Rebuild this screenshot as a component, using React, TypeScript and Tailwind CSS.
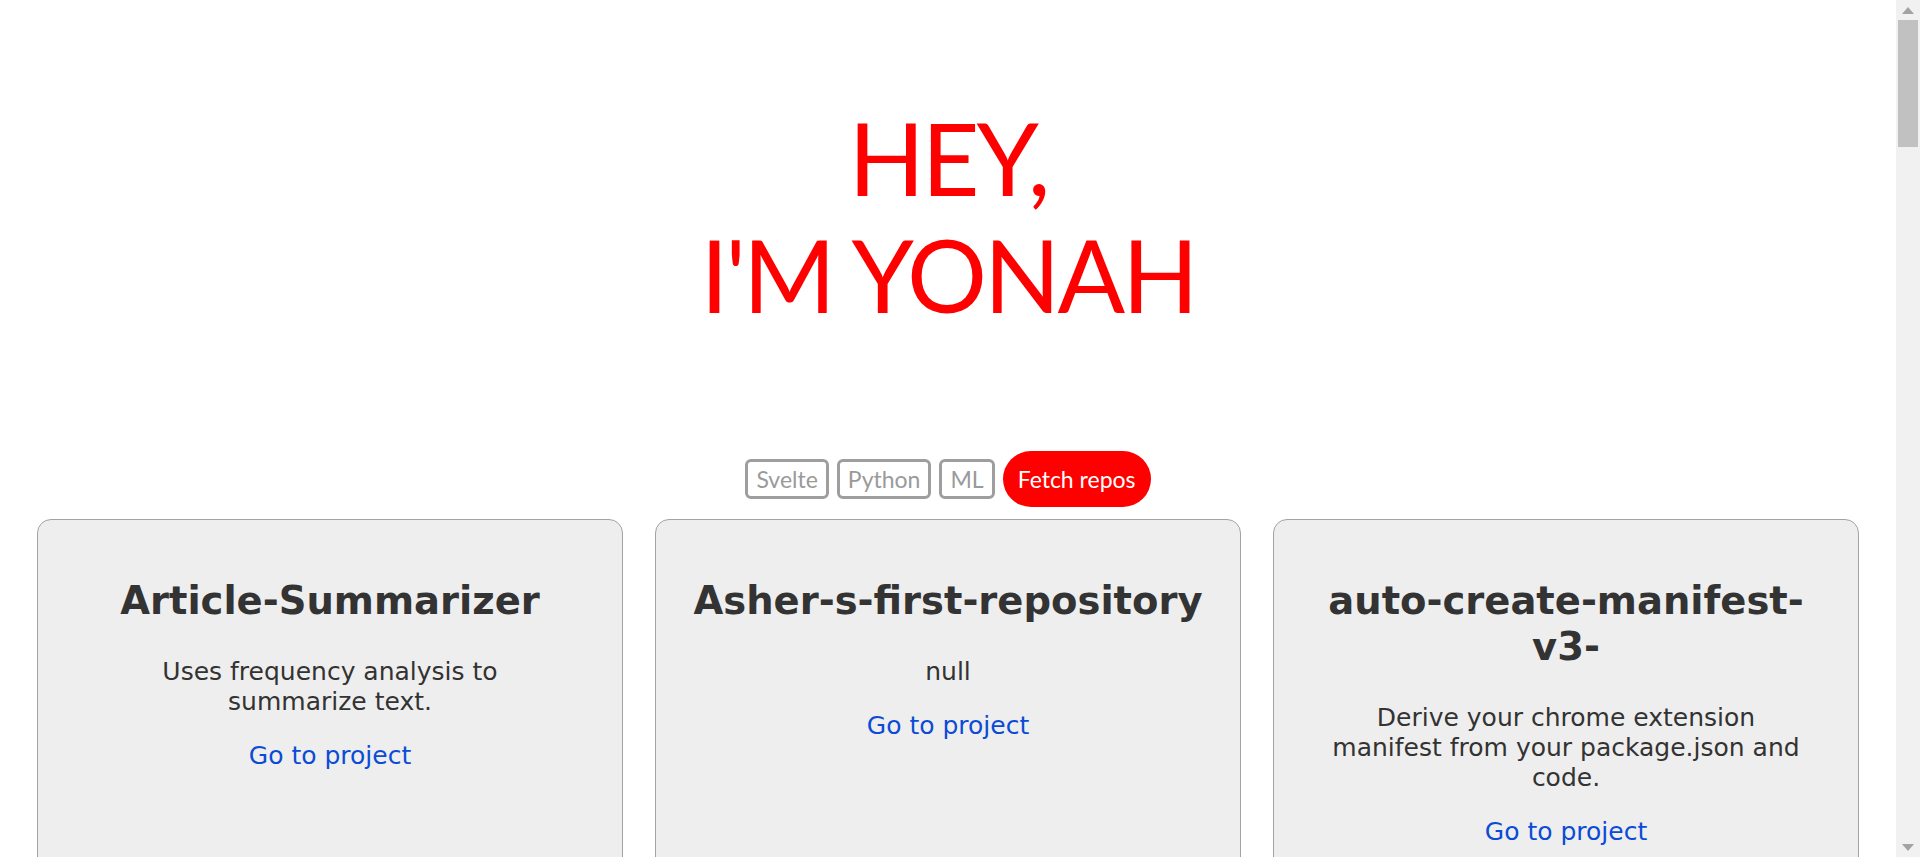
const repos = [
  {
    name: "Article-Summarizer",
    description: "Uses frequency analysis to\nsummarize text.",
  },
  {
    name: "Asher-s-first-repository",
    description: "null",
  },
  {
    name: "auto-create-manifest-v3-",
    description: "Derive your chrome extension\nmanifest from your package.json and\ncode.",
  },
];

const tags = ["Svelte", "Python", "ML"];

function Scrollbar() {
  return (
    <div className="w-[24px] shrink-0 bg-[#f1f1f1] flex flex-col items-center">
      <div className="h-[20px] w-full flex items-center justify-center">
        <svg width="12" height="7" viewBox="0 0 12 7">
          <path d="M0 7 L6 0 L12 7 Z" fill="#a3a3a3" />
        </svg>
      </div>
      <div className="w-[20px] h-[127px] bg-[#c1c1c1]" />
      <div className="flex-1" />
      <div className="h-[20px] w-full flex items-center justify-center">
        <svg width="12" height="7" viewBox="0 0 12 7">
          <path d="M0 0 L6 7 L12 0 Z" fill="#a3a3a3" />
        </svg>
      </div>
    </div>
  );
}

function RepoCard({ name, description }: { name: string; description: string }) {
  return (
    <div
      className="bg-[#eeeeee] border border-[#a3a3a3] rounded-[14px] px-[30px] pt-[58px] pb-[120px] text-center text-[#333333]"
      style={{ fontFamily: '"DejaVu Sans", Verdana, sans-serif' }}
    >
      <h2 className="text-[38.5px] leading-[46px] font-bold">{name}</h2>
      <p className="mt-[33px] text-[25px] leading-[30px] whitespace-pre-line">{description}</p>
      <p className="mt-[24px] text-[25px] leading-[30px]">
        <a href="#" className="text-[#0b4bd6]">Go to project</a>
      </p>
    </div>
  );
}

export default function App() {
  return (
    <div className="h-[857px] w-full flex overflow-hidden bg-white">
      <main className="flex-1 overflow-hidden px-[37px]">
        <h1
          className="pt-[99px] text-center text-[100px] leading-[117px] tracking-[-3px] text-[#ff0000]"
          style={{ fontFamily: 'Lato, "Open Sans", sans-serif' }}
        >
          HEY,
          <br />
          I'M YONAH
        </h1>

        <div
          className="mt-[118px] flex justify-center items-center gap-[8px] text-[23px]"
          style={{ fontFamily: 'Lato, "Open Sans", sans-serif' }}
        >
          {tags.map((t) => (
            <button
              key={t}
              className="h-[40px] px-[8px] border-[3px] border-[#9e9e9e] rounded-[6px] text-[#9a9a9a] leading-none"
            >
              {t}
            </button>
          ))}
          <button className="h-[56px] px-[15px] rounded-full bg-[#ff0000] text-white leading-none">
            Fetch repos
          </button>
        </div>

        <div className="mt-[12px] grid grid-cols-3 gap-[32px]">
          {repos.map((r) => (
            <RepoCard key={r.name} name={r.name} description={r.description} />
          ))}
        </div>
      </main>
      <Scrollbar />
    </div>
  );
}
